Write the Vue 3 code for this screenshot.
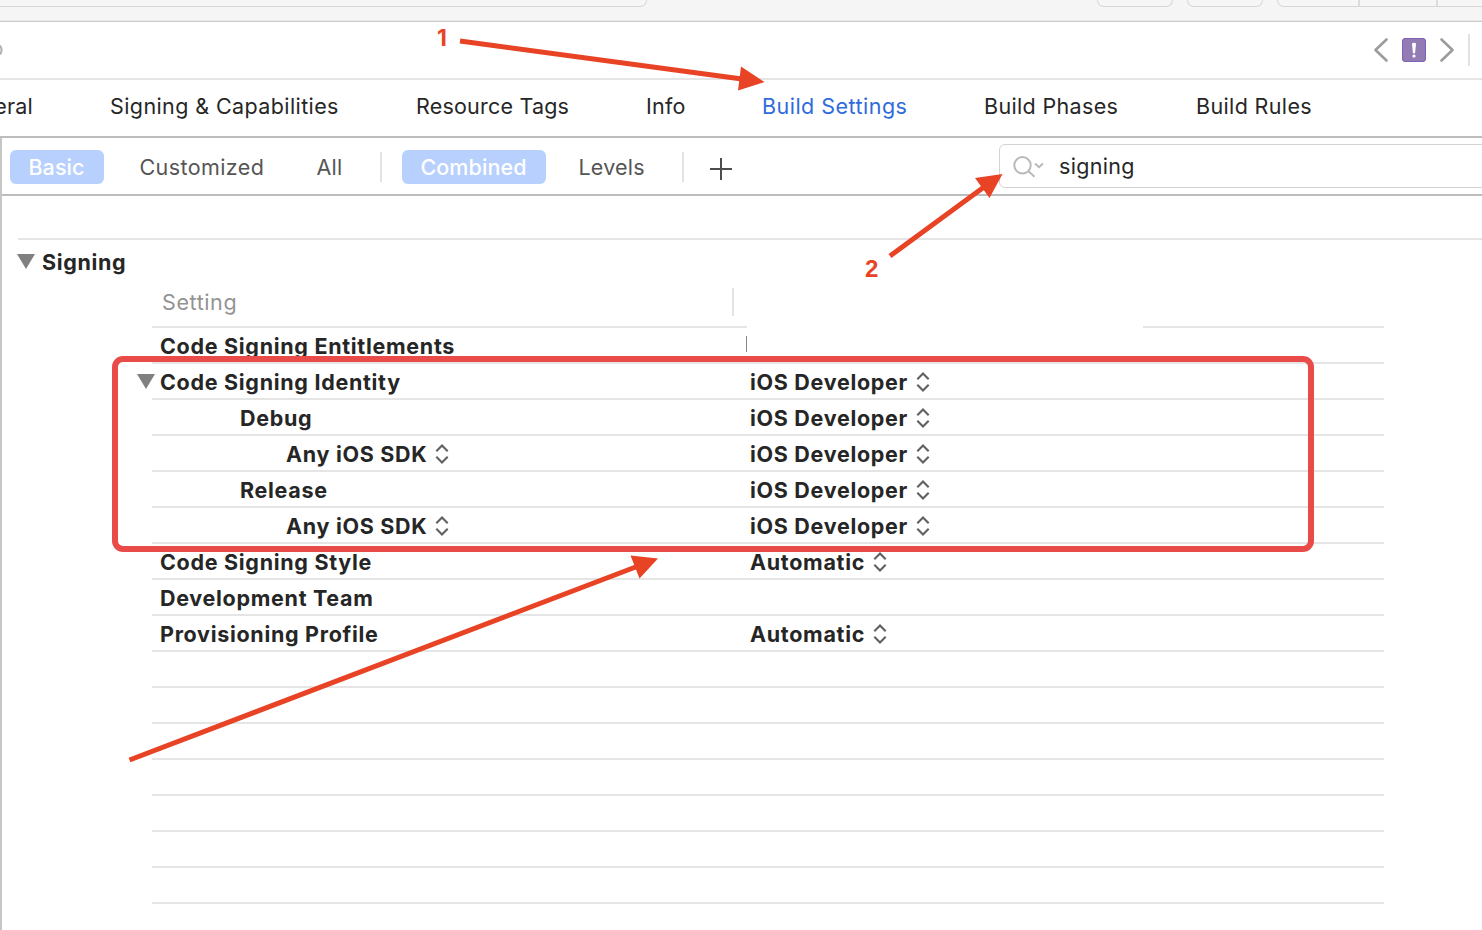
<script setup>
const tabs = [
  { label: 'General', cls: 'clipped', track: 0.2 },
  { label: 'Signing & Capabilities', track: 0.4 },
  { label: 'Resource Tags', track: 0.2 },
  { label: 'Info', track: 0.2 },
  { label: 'Build Settings', cls: 'active', track: 0.48 },
  { label: 'Build Phases', track: 0.34 },
  { label: 'Build Rules', track: 0.36 },
]

const rows = [
  { name: 'Code Signing Entitlements', caret: true },
  { name: 'Code Signing Identity', value: 'iOS Developer', open: true },
  { name: 'Debug', value: 'iOS Developer', level: 1 },
  { name: 'Any iOS SDK', value: 'iOS Developer', level: 2, picker: true },
  { name: 'Release', value: 'iOS Developer', level: 1 },
  { name: 'Any iOS SDK', value: 'iOS Developer', level: 2, picker: true },
  { name: 'Code Signing Style', value: 'Automatic' },
  { name: 'Development Team' },
  { name: 'Provisioning Profile', value: 'Automatic' },
  ...Array.from({ length: 7 }, () => ({ name: '' })),
]
</script>

<template>
  <div class="window">
    <div class="toolbar">
      <div class="status"></div>
      <div class="tool"></div>
      <div class="tool"></div>
      <div class="tool group"><i></i><i></i></div>
    </div>

    <div class="jumpbar">
      <svg class="dot" width="3" height="12" viewBox="0 0 3 12"><path d="M0 1.500Q3 6 0 10.500" /></svg>
      <svg class="chev" width="16" height="26" viewBox="0 0 16 26"><path d="M13.5 2.5 2.5 13l11 10.5" /></svg>
      <span class="issue">
        <svg width="24" height="24" viewBox="0 0 24 24"><path d="M10 6.1q0-1.3 2-1.3t2 1.3l-.9 8.7q-.1.7-1.1.7t-1.1-.7z" /><circle cx="12" cy="18" r="1.6" /></svg>
      </span>
      <svg class="chev next" width="16" height="26" viewBox="0 0 16 26"><path d="m2.5 2.5 11 10.5-11 10.5" /></svg>
      <span class="bar"></span>
    </div>

    <nav class="tabs">
      <span v-for="t in tabs" :key="t.label" :class="t.cls" :style="{ letterSpacing: t.track + 'px' }">{{ t.label }}</span>
    </nav>

    <div class="editor">
      <div class="filters">
        <span class="pill basic">Basic</span>
        <span class="opt customized">Customized</span>
        <span class="opt all">All</span>
        <span class="sep"></span>
        <span class="pill combined">Combined</span>
        <span class="opt levels">Levels</span>
        <span class="sep second"></span>
        <svg class="plus" width="22" height="22" viewBox="0 0 22 22"><path d="M11 0v22M0 11h22" /></svg>
        <div class="search">
          <svg width="32" height="24" viewBox="0 0 32 24">
            <circle cx="9.5" cy="10.3" r="8.2" /><path d="m15.5 16.2 6 5.6M22 8.5l4 3.7 4-3.7" />
          </svg>
          <span>signing</span>
        </div>
      </div>

      <section>
        <h2>
          <svg class="disclosure" width="18" height="15" viewBox="0 0 18 15"><path d="M0 0h18L9 15z" /></svg>
          <span>Signing</span>
        </h2>
        <div class="table">
          <div class="head">
            <span class="title">Setting</span>
            <i class="colsep"></i>
            <i class="rule left"></i><i class="rule right"></i>
          </div>
          <div v-for="(r, i) in rows" :key="i" class="row">
            <div class="name" :class="'level' + (r.level || 0)">
              <svg v-if="r.open" class="disclosure nested" width="18" height="15" viewBox="0 0 18 15"><path d="M0 0h18L9 15z" /></svg>
              <span>{{ r.name }}</span>
              <svg v-if="r.picker" class="updown" width="14" height="20" viewBox="0 0 14 20"><path d="M1.3 7.3 7 1.5l5.7 5.8M1.3 12.7 7 18.5l5.7-5.8" /></svg>
            </div>
            <div v-if="r.value" class="value">
              <span>{{ r.value }}</span>
              <svg class="updown" width="14" height="20" viewBox="0 0 14 20"><path d="M1.3 7.3 7 1.5l5.7 5.8M1.3 12.7 7 18.5l5.7-5.8" /></svg>
            </div>
            <i v-if="r.caret" class="caret"></i>
          </div>
        </div>
      </section>
    </div>

    <div class="highlight"></div>
    <svg class="notes" width="1482" height="930" viewBox="0 0 1482 930">
      <path class="line" d="M460 41 742 79M890 256 984 187M129.500 760 637 566.500" />
      <path class="tip" d="M764.500 82 741 66.500 738 90.500zM1002.500 174 975 178 989.500 198zM658 558.500 630.500 555.500 639.500 578.500z" />
      <text class="one" x="437" y="46">1</text>
      <text x="865" y="276.500">2</text>
    </svg>
  </div>
</template>

<style>
body { margin: 0; overflow: hidden; }
</style>

<style scoped>
.window {
  position: relative;
  width: 1482px;
  height: 930px;
  overflow: hidden;
  background: #fff;
  color: #262626;
  font: 400 21.5px/28px Inter, "Liberation Sans", sans-serif;
  white-space: nowrap;
}
.window * { box-sizing: border-box; }
svg { display: block; flex: none; }
path { fill: none; }

.toolbar { display: flex; height: 22px; background: #f5f5f5; border-bottom: 1px solid #cbcbcb; box-shadow: inset 0 -1px #e9e9e9; }
.toolbar > *, .filters > *, .jumpbar > * { flex: none; }
.status { width: 647px; height: 7px; margin-right: 450px; border: solid #d7d7d7; border-width: 0 1px 1px 0; border-radius: 0 0 8px 0; background: #f6f6f6; }
.tool { width: 76px; height: 7px; margin-right: 14px; border: solid #d7d7d7; border-width: 0 1px 1px; border-radius: 0 0 8px 8px; background: #f6f6f6; }
.group { display: flex; width: 230px; margin: 0; padding-left: 80px; gap: 76px; }
.group i { width: 2px; height: 6px; background: #dcdcdc; }

.jumpbar { display: flex; align-items: center; height: 58px; padding-bottom: 2px; box-shadow: inset 0 -2px #e5e5e5; }
.dot { margin-right: 1370px; }
.dot path { stroke: #b0b0b0; stroke-width: 2; }
.chev path { stroke: #9c9c9c; stroke-width: 2.6; stroke-linecap: round; stroke-linejoin: round; }
.next { margin-left: 13px; }
.issue { width: 24px; height: 24px; margin-left: 13px; border-radius: 4px; background: #937cb4; box-shadow: inset 0 0 0 1px #8060b3; }
.issue path, .issue circle { fill: #fff; }
.bar { width: 2px; height: 32px; margin-left: 13px; background: #e2e2e2; }

.tabs { display: grid; grid-template-columns: 110px 306px 230px 116px 222px 212px 200px; align-items: center; height: 58px; padding: 0 0 5px; border-bottom: 2px solid #bdbdbd; }
.tabs .clipped { display: flex; justify-content: flex-end; width: 33px; overflow: hidden; }
.tabs .active { color: #2f6bdb; }

.editor { height: 792px; border-left: 2px solid #c6c6c6; }
.filters { display: flex; align-items: center; height: 58px; border-bottom: 2px solid #bdbdbd; padding-left: 8px; color: #555; }
.pill, .opt, .sep { margin-top: 2px; }
.pill { height: 34px; line-height: 34px; border-radius: 6px; background: #b8d0fd; color: #fff; text-align: center; font-weight: 500; }
.basic { width: 94px; padding-right: 1px; letter-spacing: 0.1px; }
.combined { width: 144px; margin-left: 20px; padding-right: 1px; letter-spacing: 0.1px; }
.opt { letter-spacing: 0.2px; }
.opt.customized { width: 177px; padding-left: 35.5px; letter-spacing: 0.4px; }
.opt.all { width: 99px; padding-left: 35.5px; }
.sep { width: 2px; height: 30px; background: #e3e3e3; }
.opt.levels { width: 136px; padding-left: 32.5px; }
.plus { margin: 5px 267px 0 26px; }
.plus path { stroke: #4d4d4d; stroke-width: 2; }
.search { display: flex; align-items: center; width: 500px; height: 44px; margin-top: -1px; padding-left: 13px; border: 1px solid #d3d3d3; border-radius: 6px; color: #262626; }
.search svg { margin-top: 3px; }
.search circle, .search path { fill: none; stroke: #b9b9b9; stroke-width: 2; }
.search span { margin-left: 14px; letter-spacing: 0.3px; }

section { margin: 42px 0 0 16px; border-top: 2px solid #e5e5e5; font-weight: 700; }
h2 { display: flex; align-items: center; height: 44px; margin: 0 0 0 -1px; font: inherit; letter-spacing: 0.65px; }
.disclosure { margin: -2px 7px 0 0; }
.disclosure path { fill: #808080; }
.table { width: 1232px; margin-left: 134px; }
.head { position: relative; display: flex; align-items: center; height: 44px; padding-bottom: 8px; }
.title { width: 580px; padding-left: 10px; color: #939393; font-weight: 400; letter-spacing: 0.6px; }
.colsep { width: 2px; height: 28px; background: #e3e3e3; }
.rule { position: absolute; bottom: 0; height: 2px; background: #e5e5e5; }
.rule.left { left: 0; width: 595px; }
.rule.right { right: 0; width: 241px; }
.row { position: relative; display: flex; height: 36px; padding-top: 4px; border-bottom: 2px solid #e5e5e5; }
.name { position: relative; display: flex; width: 598px; padding-left: 8px; letter-spacing: 0.7px; }
.level1 { padding-left: 88px; }
.level2 { padding-left: 134px; }
.nested { position: absolute; left: -15px; top: 8px; }
.value { display: flex; letter-spacing: 0.7px; }
.updown { margin: 4px 0 0 8px; }
.updown path { stroke: #606060; stroke-width: 2.1; }
.caret { position: absolute; left: 594px; top: 8px; width: 1px; height: 16px; background: #888; }

.highlight { position: absolute; left: 112px; top: 356px; width: 1202px; height: 196px; border: 6px solid #e94b48; border-radius: 11px; }
.notes { position: absolute; left: 0; top: 0; }
.line { stroke: #e84325; stroke-width: 5; }
.tip, .notes text { fill: #e84325; }
.notes text { font: 700 24px "Liberation Sans", sans-serif; }
.notes .one { font: 700 23px Inter, sans-serif; }
</style>
